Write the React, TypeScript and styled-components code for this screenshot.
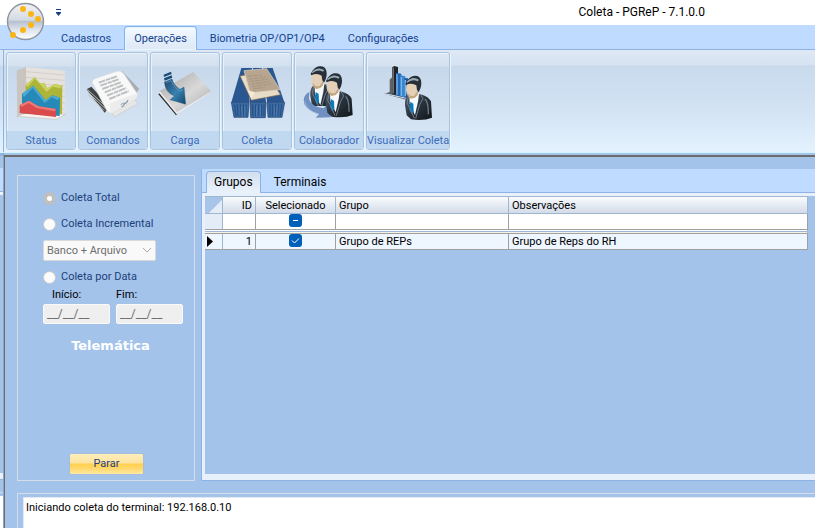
import React, { useEffect, useRef, useState } from "react";
import styled, { createGlobalStyle, css } from "styled-components";

const Global = createGlobalStyle`
  * { box-sizing: border-box; }
  html, body, #root { height: 100%; }
  body { margin: 0; overflow: hidden; background: #a3c3eb; }
  body, button, input, select, textarea, table {
    font-family: Roboto, "Liberation Sans", Arial, sans-serif;
    font-size: 11px;
    line-height: 16px;
  }
`;

const Window = styled.div`
  display: flex;
  flex-direction: column;
  height: 100vh;
`;

const TitleBar = styled.header`
  display: flex;
  height: 25px;
  background: #fff;
  position: relative;
`;

const Orb = styled.button`
  position: absolute;
  z-index: 2;
  left: 6px;
  top: 2px;
  width: 40px;
  height: 40px;
  padding: 0;
  border: 0;
  background: none;
  svg { display: block; }
`;

const QuickMenu = styled.button`
  width: 12px;
  height: 12px;
  margin: 7px 0 0 52px;
  padding: 0;
  border: 0;
  background: none;
  svg { display: block; }
`;

const Title = styled.h1`
  margin: 0 110px 0 auto;
  padding-top: 3px;
  font: 12px/18px Roboto, sans-serif;
  color: #000;
`;

const RibbonTabs = styled.nav`
  display: flex;
  align-items: flex-end;
  gap: 3px;
  height: 25px;
  padding-left: 51px;
  background: #bfdbff;
  border-bottom: 1px solid #8db2e3;
`;

const RibbonTab = styled.button<{ $active?: boolean }>`
  height: 24px;
  padding: 0 9px;
  margin-bottom: -1px;
  border: 1px solid transparent;
  border-bottom: 0;
  border-radius: 4px 4px 0 0;
  background: none;
  color: #15428b;
  white-space: nowrap;
  ${(p) =>
    p.$active &&
    css`
      border-color: #7fb4ee;
      background: linear-gradient(#f6faff, #e3eefb 60%, #dfe9f5);
      box-shadow: inset 0 0 0 1px #e8f6ff;
    `}
`;

const Ribbon = styled.div`
  display: flex;
  gap: 2px;
  height: 103px;
  padding: 2px 3px 2px 0;
  border-bottom: 1px solid #d2f6ff;
  background: linear-gradient(#dfe9f5, #d5e2f1 15px, #c9daed 16px, #d3e3f4 60px, #e3f2fd);
`;

const RibbonEdge = styled.div`
  flex: 0 0 4px;
  margin: -2px 0;
  border-right: 1px solid #8db2e3;
`;

const Tool = styled.button`
  display: flex;
  flex-direction: column;
  align-items: center;
  min-width: 70px;
  padding: 0;
  border: 1px solid #a9c4df;
  border-radius: 3px;
  overflow: hidden;
  color: #3b6cb9;
  background: linear-gradient(#dce7f3, #d4e1ef 13px, #c7d8eb 14px, #d9e8f7);
  box-shadow: 1px 1px 0 #eef5fc, inset 1px 1px 0 #e9f1f9;
  white-space: nowrap;
  svg { margin: 12px 0 auto; }
`;

const ToolLabel = styled.span`
  align-self: stretch;
  height: 18px;
  padding-top: 2px;
  background: #c1d8f1;
`;

const Workspace = styled.div`
  display: flex;
  flex: 1;
  min-height: 0;
`;

const BackWindow = styled.div`
  flex: 0 0 4px;
  border-right: 1px solid #8fa4be;
  background: linear-gradient(#93b4de 3px, #a3c3eb 3px 15px, #bfdbff 15px 38px, #8db2e3 38px 39px, #eaf2fb 39px 42px, #a3c3eb 42px 320px, #e8f1fc 320px 326px, #8db2e3 326px 327px, #a3c3eb 327px 339px, #d5dde8 339px 340px, #a3c3eb 340px 343px, #fff 343px);
`;

const Child = styled.main`
  display: flex;
  flex: 1;
  flex-direction: column;
  min-width: 0;
  margin-top: 2px;
  border: 1px solid #6c6c6c;
  border-width: 2px 0 0 1px;
  background: #a3c3eb;
`;

const Panels = styled.div`
  display: flex;
  flex: 1;
  min-height: 0;
  gap: 6px;
  padding: 12px 0 12px 12px;
`;

const Options = styled.form`
  display: flex;
  flex: 0 0 178px;
  flex-direction: column;
  margin-top: 6px;
  padding: 14px 11px 5px 25px;
  border: 1px solid #d5dcea;
  color: #1e3f77;
`;

const RadioRow = styled.label`
  display: flex;
  align-items: center;
  gap: 5px;
  height: 16px;
  margin-bottom: 10px;
`;

const Radio = styled.input`
  appearance: none;
  width: 13px;
  height: 13px;
  margin: 0;
  border: 1px solid #c9c9c9;
  border-radius: 50%;
  background: #fbfbfb;
  &:checked { border: 4px solid #bfbfbf; background: #fff; }
`;

const SelectWrap = styled.div`
  position: relative;
  width: 113px;
  height: 21px;
  margin: -2px 0 8px;
  svg { position: absolute; right: 4px; top: 7px; pointer-events: none; }
`;

const Select = styled.select`
  appearance: none;
  width: 100%;
  height: 21px;
  padding: 0 3px;
  border: 1px solid #d9d9d9;
  border-radius: 2px;
  background: #f9f9f9;
  color: #6d6d6d;
  opacity: 1;
`;

const Dates = styled.div`
  display: flex;
  gap: 6px;
  margin-top: -8px;
`;

const DateField = styled.label<{ $indent?: boolean }>`
  width: 67px;
  color: #000;
  span { display: block; padding-left: ${(p) => (p.$indent ? 9 : 0)}px; }
`;

const DateInput = styled.input`
  display: block;
  width: 67px;
  height: 20px;
  margin-top: 1px;
  padding: 0 3px;
  border: 1px solid #fafafa;
  border-radius: 2px;
  background: #efefef;
  color: #6d6d6d;
  font-size: 12px;
`;

const Brand = styled.strong`
  margin: 13px 5px auto 0;
  text-align: center;
  font: bold 13px/18px "DejaVu Sans", Verdana, sans-serif;
  color: #fff;
`;

const StopButton = styled.button`
  width: 75px;
  height: 22px;
  margin-left: 26px;
  padding: 0;
  border: 1px solid #a6bddd;
  border-radius: 2px;
  background: linear-gradient(#fdeebb, #fde3a0 9px, #ffcf4e 10px, #ffd970 15px, #ffe9a3);
  color: #1e3f77;
`;

const TabControl = styled.section`
  display: flex;
  flex: 1;
  flex-direction: column;
  min-width: 0;
  border: 1px solid #8db2e3;
  border-width: 0 0 1px 1px;
`;

const TabStrip = styled.div`
  display: flex;
  align-items: flex-end;
  height: 24px;
  padding-left: 4px;
  background: #bfdbff;
  border-bottom: 1px solid #8db2e3;
`;

const Tab = styled.button<{ $active?: boolean }>`
  height: 22px;
  padding: 0 12px 2px;
  margin-bottom: -1px;
  border: 1px solid transparent;
  border-bottom: 0;
  background: none;
  color: #000;
  font-size: 12px;
  ${(p) =>
    p.$active &&
    css`
      padding: 0 7px 2px;
      border-color: #8db2e3;
      border-radius: 4px 4px 0 0;
      background: linear-gradient(#d3dfee, #eaf2fb);
    `}
`;

const TabPage = styled.div`
  flex: 1;
  min-height: 0;
  border: 3px solid #e8f0fb;
  border-width: 3px 0 6px 3px;
  background: #a3c3eb;
`;

const GridArea = styled.div`
  padding-right: 7px;
`;

const Grid = styled.table`
  width: 100%;
  table-layout: fixed;
  border-spacing: 0;
  color: #000;
  th, td {
    height: 16px;
    padding: 0 3px;
    border-right: 1px solid #a0a0a0;
    border-bottom: 1px solid #a0a0a0;
    background: #fff;
    line-height: 15px;
    text-align: left;
    font-weight: normal;
    white-space: nowrap;
  }
  thead th {
    height: 18px;
    border-color: #9eb6ce;
    border-top: 1px solid #9eb6ce;
    background: linear-gradient(#f9fcfd, #d3dbe9);
  }
  th:first-child, td:first-child {
    padding: 0;
    border-right-color: #9eb6ce;
    background: #e4ecf7;
  }
  thead th:first-child { background: linear-gradient(135deg, #a9c4e9 60%, #e4ecf7 61%); }
  thead th:nth-child(2), td:nth-child(2) { text-align: right; }
  th:nth-child(3), td:nth-child(3) { text-align: center; }
  svg { display: block; }
`;

const Col = styled.col<{ $w?: number }>`
  width: ${(p) => (p.$w ? `${p.$w}px` : "auto")};
`;

const FilterInput = styled.input`
  display: block;
  width: 100%;
  height: 15px;
  padding: 0;
  border: 0;
  outline: 0;
  background: transparent;
`;

const DataRow = styled.tr`
  && td { background: #eef6ff; }
`;

const Divider = styled.tr`
  && td {
    height: 4px;
    padding: 0;
    border-bottom: 1px solid #a0a0a0;
    background: linear-gradient(#fff 1px, #9eb6dd 1px 2px, #f3f3ea 2px);
  }
`;

const CheckLabel = styled.label`
  display: grid;
  justify-content: center;
  height: 15px;
  > * { grid-area: 1 / 1; }
  svg { pointer-events: none; }
`;

const Check = styled.input`
  appearance: none;
  width: 13px;
  height: 13px;
  margin: 0;
  border-radius: 3px;
  background: #005fb8;
`;

const LogFrame = styled.section`
  flex: 0 0 35px;
  display: flex;
  min-height: 0;
  margin-left: 12px;
  padding: 3px 0 0 5px;
  border: 1px solid #d5dcea;
  border-width: 1px 0 0 1px;
`;

const Log = styled.textarea`
  flex: 1;
  height: 100%;
  min-height: 0;
  resize: none;
  padding: 2px;
  border: 1px solid #e3e9f2;
  border-width: 1px 0 0 1px;
  outline: 0;
  overflow: hidden;
  background: #fff;
  color: #000;
`;

const Art = ({ x, children }: { x: number; children: React.ReactNode }) => (
  <svg width="56" height="56" viewBox={`${x} 60 168 168`} aria-hidden="true">{children}</svg>
);

const StatusIcon = () => (
  <Art x={39}>
    <path d="M50 77 78 66 80 205 52 215Z" fill="#c9c4bf" />
    <path d="M78 66 195 77 194 207 80 204Z" fill="#e5e1dd" />
    <path d="M50 214 80 203 196 208 169 223Z" fill="#f5f3f0" stroke="#c7beb7" strokeWidth="2" />
    <g fill="none" stroke="#cbc5c0" strokeWidth="2">
      <path d="M51 91 78 80 194 90M51 108 78 97 194 106M51 125 78 114 194 122M51 144 78 132 194 138M51 163 78 151 194 154M51 182 78 170 194 174M51 200 78 188 194 193" />
    </g>
    <path d="M77 121 104 96 121 116 133 113 142 130 164 117 187 122 186 207 77 200Z" fill="#aeb536" />
    <path d="M77 121 104 96 121 116 133 113 142 130 164 117 187 122 180 130 158 125 140 141 122 120 104 101 84 125Z" fill="#cbd161" />
    <path d="M66 146 100 122 137 166 157 151 180 158 179 213 66 205Z" fill="#2789b8" />
    <path d="M66 146 100 122 137 166 157 151 180 158 173 165 155 157 134 174 98 129 72 156Z" fill="#4aaad1" />
    <path d="M59 180 87 167 115 184 168 192 168 216 59 204Z" fill="#d94b4d" />
    <path d="M59 180 87 167 115 184 168 192 164 199 110 189 86 174 65 185Z" fill="#f07976" />
  </Art>
);

const PaperIcon = () => (
  <Art x={255}>
    <path d="M366 78 418 132 405 147 357 92Z" fill="#a8adb1" />
    <path d="M260 133 274 125 329 184 314 203Z" fill="#3f4141" />
    <path d="M263 141 316 191M265 149 313 197M263 134 318 185" stroke="#b9bcbe" strokeWidth="3" />
    <path d="M276 108 344 86 401 157 331 205Z" fill="#d3d3d3" />
    <path d="M337 205 404 163 413 176 343 216Z" fill="#e6e6e6" stroke="#c7c7c7" strokeWidth="2" />
    <path d="M284 101 349 79Q361 75 370 84L413 148Q415 158 402 162L336 204Q326 207 319 194L280 119Q271 109 284 101Z" fill="#f8f8f8" stroke="#d6d6d6" strokeWidth="2" />
    <path d="M296 113 351 94M301 122 356 103M307 132 363 112M314 142 371 120M321 152 379 129M328 162 386 138" stroke="#bdbfc1" strokeWidth="6" strokeDasharray="21 2 13 2" />
    <path d="M329 177Q350 164 408 147 415 154 405 163L338 205Q329 203 331 189Z" fill="#ececec" />
    <path d="M362 179q13-8 12-3t-7 7q-5 4 2 2 3-11 11-11l4-9-11 13" fill="none" stroke="#8d9cae" strokeWidth="3" />
  </Art>
);

const LoadIcon = () => (
  <Art x={27}>
    <defs>
      <linearGradient id="sheet" x2="1" y2="1"><stop stopColor="#a2a2a2" /><stop offset=".55" stopColor="#d9d9d9" /><stop offset="1" stopColor="#a8a8a8" /></linearGradient>
      <linearGradient id="arrow" x2="1" y2="1"><stop stopColor="#1d4569" /><stop offset=".55" stopColor="#3b82b0" /><stop offset="1" stopColor="#0d456d" /></linearGradient>
    </defs>
    <path d="M31 148 41 139 94 200 84 211Z" fill="#343434" />
    <path d="M33 143 136 84 190 140 86 208Z" fill="#eee" />
    <path d="M35 138 136 81 190 139 87 202Z" fill="url(#sheet)" />
    <path d="M47 89 69 80 71 87 48 96ZM48 100 71 91 73 98 50 107Z" fill="#194d75" />
    <path d="M49 111 72 102Q77 121 96 133L108 126 113 178 66 164 79 153Q52 143 49 111Z" fill="url(#arrow)" stroke="#174a70" strokeWidth="1" />
    <path d="M53 113 69 107Q76 126 97 139L105 134" fill="none" stroke="#6ba5c8" strokeWidth="2" />
  </Art>
);

const CollectIcon = () => (
  <Art x={243}>
    <path d="M280 69 312 69 304 172 250 172ZM315 69 342 69 354 172 305 172ZM346 69 374 69 409 172 357 172Z" fill="#2b5791" />
    <path d="M250 172H303L300 217H258ZM306 172H354L352 218H308ZM357 172H410L402 217H360Z" fill="#3a69a1" stroke="#1d3d69" strokeWidth="2" />
    <path d="M260 178 264 213M268 178 270 213M277 178 279 213M286 178V213M294 178V213M314 178V213M323 178V213M332 178V213M341 178V213M348 178V213M366 178V213M374 178V213M383 178 381 213M392 178 389 213M401 178 397 213" stroke="#244f83" strokeWidth="3" />
    <path d="M280 184 283 214M291 184V214M326 182V214M337 182V214M379 182V214M388 182 386 214" stroke="#85add3" strokeWidth="1" />
    <path d="M276 93 350 79 398 149 310 166Z" fill="#e6dcc8" stroke="#75634c" strokeWidth="2" />
    <path d="M288 77 356 71 397 134 306 144Z" fill="#b7a58f" stroke="#e4d7c1" strokeWidth="2" />
    <path d="M300 94 341 90M303 103 355 95M307 110 360 102M310 118 365 109M313 125 371 116M316 132 351 127" stroke="#9f8e79" strokeWidth="2" strokeDasharray="11 2 17 3" />
    <path d="M298 135 321 142 310 161Z" fill="#f5ead4" />
  </Art>
);

const Person = ({ x, y }: { x: number; y: number }) => (
  <g transform={`translate(${x} ${y})`}>
    <path d="M16 60Q34 46 43 56L57 59Q78 66 84 79L87 128Q63 138 24 133L11 121 6 91Q4 70 16 60Z" fill="url(#suit)" />
    <path d="M19 60Q34 48 48 56L45 80 36 120 20 86Z" fill="#f8f9fa" />
    <path d="M22 80 31 86 32 110 26 118 19 104Z" fill="#087abd" />
    <path d="M16 66 12 84 19 97 34 130M52 57 60 71 50 89 38 130" fill="none" stroke="#6d7f8f" strokeWidth="3" />
    <path d="M11 28Q6 48 13 60 22 74 36 66L47 48 42 20 18 18Z" fill="#e3d0b6" />
    <path d="M12 50Q18 66 34 62L46 44 44 60 36 68 24 71 15 64Z" fill="#c4a67f" />
    <path d="M7 26Q15 8 31 3 49 0 54 16 58 33 47 52L42 45 40 31Q26 22 9 30Z" fill="#273039" />
    <path d="M11 20Q28 2 48 14L44 19Q27 10 12 24Z" fill="#9aabb6" />
    <path d="M66 72Q77 84 76 118" fill="none" stroke="#6a7985" strokeWidth="4" />
  </g>
);

const SuitGradient = () => (
  <linearGradient id="suit" x2="1" y2="1">
    <stop stopColor="#566574" />
    <stop offset=".5" stopColor="#2a333c" />
    <stop offset="1" stopColor="#11161b" />
  </linearGradient>
);

const PeopleIcon = () => (
  <Art x={33}>
    <defs>
      <SuitGradient />
      <clipPath id="bust"><path d="M45 60H145V183H45Z" /></clipPath>
    </defs>
    <g clipPath="url(#bust)"><Person x={55} y={61} /></g>
    <path d="M58 140Q35 153 43 177 53 198 87 207L78 218 123 217 112 176 101 190Q62 184 57 161Z" fill="#7190c2" />
    <path d="M44 169Q53 199 86 208L77 217" fill="none" stroke="#a7bddf" strokeWidth="2" />
    <Person x={101} y={82} />
  </Art>
);

const ViewIcon = () => (
  <Art x={270}>
    <path d="M282 146 302 140 357 149 349 164Z" fill="#53606d" />
    <path d="M284 146 349 160" stroke="#d4e0e9" strokeWidth="3" />
    <path d="M299 104 306 97 310 145 299 147Z" fill="#5c6267" />
    <path d="M306 68 312 63 324 66V151L307 148Z" fill="#20242a" />
    <path d="M307 70 312 67V146L307 145Z" fill="#6a6f73" />
    <path d="M318 83 334 86V155L318 149Z" fill="#2669b6" />
    <path d="M331 91 346 94V158L331 152Z" fill="#3c86d0" />
    <path d="M344 99 354 100V160L344 155Z" fill="#2058a0" />
    <path d="M321 88V149M334 96V153M346 105V154" stroke="#77b8f0" strokeWidth="4" />
    <Person x={339} y={90} />
  </Art>
);

const tools = [
  ["Status", StatusIcon],
  ["Comandos", PaperIcon],
  ["Carga", LoadIcon],
  ["Coleta", CollectIcon],
  ["Colaborador", PeopleIcon],
  ["Visualizar Coleta", ViewIcon],
] as const;

const ribbonTabs = ["Cadastros", "Operações", "Biometria OP/OP1/OP4", "Configurações"];

const dots = [[17, 7], [25, 12], [32, 17], [25, 23], [17, 28], [7, 33]];

export default function App() {
  const [ribbonTab, setRibbonTab] = useState("Operações");
  const [tab, setTab] = useState("Grupos");
  const mixed = useRef<HTMLInputElement>(null);
  useEffect(() => {
    if (mixed.current) mixed.current.indeterminate = true;
  }, []);

  return (
    <>
      <Global />
      <Window>
        <TitleBar>
          <Orb aria-label="Menu principal">
            <svg width="40" height="40" viewBox="0 0 40 40">
              <defs>
                <linearGradient id="orb" x2="0" y2="1">
                  <stop stopColor="#f1f2f4" /><stop offset=".46" stopColor="#d5dae2" />
                  <stop offset=".5" stopColor="#b8c1d0" /><stop offset=".75" stopColor="#e2e7ef" /><stop offset="1" stopColor="#fff" />
                </linearGradient>
              </defs>
              <circle cx="19.5" cy="19.5" r="18" fill="url(#orb)" stroke="#8e959f" strokeWidth="1.4" />
              {dots.map(([x, y]) => <circle key={`${x}-${y}`} cx={x} cy={y} r="3" fill="#fbb615" />)}
            </svg>
          </Orb>
          <QuickMenu aria-label="Personalizar acesso rápido">
            <svg width="12" height="12"><path d="M4 2.5H9" stroke="#15428b" /><path d="M4 5H9V6L6.5 9 4 6Z" fill="#15428b" /></svg>
          </QuickMenu>
          <Title>Coleta - PGReP - 7.1.0.0</Title>
        </TitleBar>
        <RibbonTabs>
          {ribbonTabs.map((name) => (
            <RibbonTab key={name} $active={name === ribbonTab} onClick={() => setRibbonTab(name)}>{name}</RibbonTab>
          ))}
        </RibbonTabs>
        <Ribbon>
          <RibbonEdge />
          {tools.map(([name, Icon]) => (
            <Tool key={name}><Icon /><ToolLabel>{name}</ToolLabel></Tool>
          ))}
        </Ribbon>
        <Workspace>
          <BackWindow />
          <Child>
            <Panels>
              <Options onSubmit={(e) => e.preventDefault()}>
                <RadioRow><Radio type="radio" name="modo" defaultChecked disabled />Coleta Total</RadioRow>
                <RadioRow><Radio type="radio" name="modo" disabled />Coleta Incremental</RadioRow>
                <SelectWrap>
                  <Select aria-label="Destino" disabled><option>Banco + Arquivo</option></Select>
                  <svg width="10" height="7"><path d="M1 1 5 5 9 1" fill="none" stroke="#a8a8a8" /></svg>
                </SelectWrap>
                <RadioRow><Radio type="radio" name="modo" disabled />Coleta por Data</RadioRow>
                <Dates>
                  <DateField $indent><span>Início:</span><DateInput defaultValue="__/__/__" disabled /></DateField>
                  <DateField><span>Fim:</span><DateInput defaultValue="__/__/__" disabled /></DateField>
                </Dates>
                <Brand>Telemática</Brand>
                <StopButton>Parar</StopButton>
              </Options>
              <TabControl>
                <TabStrip role="tablist">
                  {["Grupos", "Terminais"].map((name) => (
                    <Tab key={name} role="tab" aria-selected={name === tab} $active={name === tab} onClick={() => setTab(name)}>{name}</Tab>
                  ))}
                </TabStrip>
                <TabPage>
                  <GridArea>
                    <Grid>
                      <colgroup><Col $w={18} /><Col $w={33} /><Col $w={80} /><Col $w={173} /><Col /></colgroup>
                      <thead>
                        <tr><th /><th>ID</th><th>Selecionado</th><th>Grupo</th><th>Observações</th></tr>
                      </thead>
                      <tbody>
                        <tr>
                          <td />
                          <td><FilterInput aria-label="Filtrar ID" /></td>
                          <td>
                            <CheckLabel>
                              <Check ref={mixed} type="checkbox" aria-label="Filtrar selecionado" />
                              <svg width="13" height="13"><path d="M4 6.5H9" stroke="#fff" /></svg>
                            </CheckLabel>
                          </td>
                          <td><FilterInput aria-label="Filtrar grupo" /></td>
                          <td><FilterInput aria-label="Filtrar observações" /></td>
                        </tr>
                        <Divider><td colSpan={5} /></Divider>
                        <DataRow>
                          <td><svg width="17" height="13"><path d="M2 1 8 6.5 2 12Z" fill="#000" /></svg></td>
                          <td>1</td>
                          <td>
                            <CheckLabel>
                              <Check type="checkbox" defaultChecked aria-label="Selecionar Grupo de REPs" />
                              <svg width="13" height="13"><path d="M3 6.5 5.5 9 10 4.5" fill="none" stroke="#fff" /></svg>
                            </CheckLabel>
                          </td>
                          <td>Grupo de REPs</td>
                          <td>Grupo de Reps do RH</td>
                        </DataRow>
                      </tbody>
                    </Grid>
                  </GridArea>
                </TabPage>
              </TabControl>
            </Panels>
            <LogFrame>
              <Log aria-label="Registro" readOnly value="Iniciando coleta do terminal: 192.168.0.10" />
            </LogFrame>
          </Child>
        </Workspace>
      </Window>
    </>
  );
}
